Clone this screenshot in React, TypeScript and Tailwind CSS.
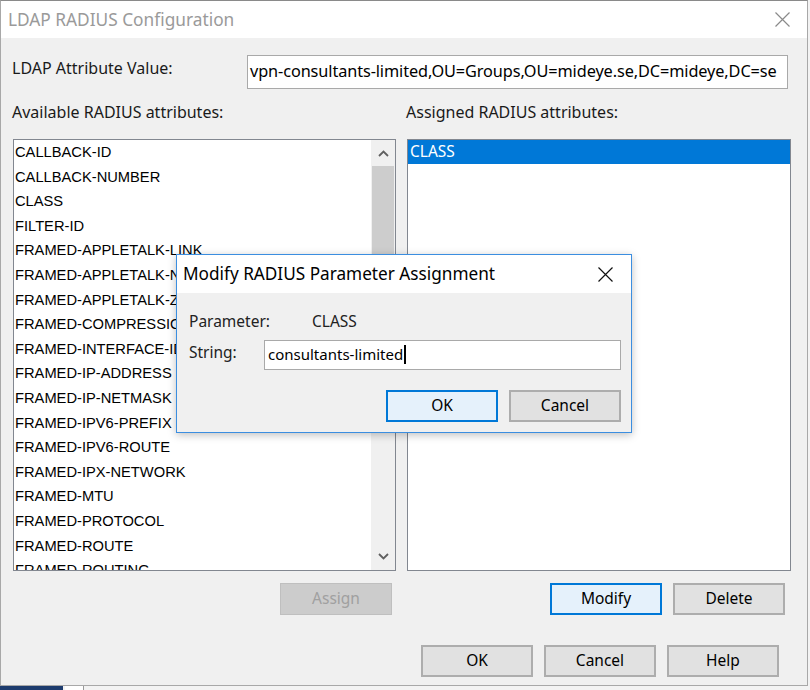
import React from "react";

const ui = "font-['Noto_Sans','Open_Sans',sans-serif]";
const dlg = "font-['Liberation_Sans',Arial,sans-serif]";

const attributes = [
  "CALLBACK-ID",
  "CALLBACK-NUMBER",
  "CLASS",
  "FILTER-ID",
  "FRAMED-APPLETALK-LINK",
  "FRAMED-APPLETALK-NETWORK",
  "FRAMED-APPLETALK-ZONE",
  "FRAMED-COMPRESSION",
  "FRAMED-INTERFACE-ID",
  "FRAMED-IP-ADDRESS",
  "FRAMED-IP-NETMASK",
  "FRAMED-IPV6-PREFIX",
  "FRAMED-IPV6-ROUTE",
  "FRAMED-IPX-NETWORK",
  "FRAMED-MTU",
  "FRAMED-PROTOCOL",
  "FRAMED-ROUTE",
  "FRAMED-ROUTING",
];

// ── Small pieces ──────────────────────────────────────────────────────────────

function CloseX({ color, size = 15 }: { color: string; size?: number }) {
  return (
    <svg width={size} height={size} viewBox="0 0 15 15">
      <path d="M0.5 0.5 L14.5 14.5 M14.5 0.5 L0.5 14.5" stroke={color} strokeWidth="1.2" />
    </svg>
  );
}

function Chevron({ up }: { up?: boolean }) {
  return (
    <svg width="11" height="7" viewBox="0 0 11 7">
      <path
        d={up ? "M1 6 L5.5 1.5 L10 6" : "M1 1 L5.5 5.5 L10 1"}
        fill="none"
        stroke="#606060"
        strokeWidth="1.8"
      />
    </svg>
  );
}

function WinButton({
  label,
  focused,
  disabled,
}: {
  label: string;
  focused?: boolean;
  disabled?: boolean;
}) {
  const look = disabled
    ? "bg-[#cccccc] border border-[#bfbfbf] text-[#a0a0a0]"
    : focused
      ? "bg-[#e5f1fb] border-2 border-[#0078d7] text-black"
      : "bg-[#e1e1e1] border-2 border-[#adadad] text-black";
  return (
    <div
      className={`w-[112px] h-[32px] flex items-center justify-center pb-[1px] text-[15.5px] ${ui} ${look}`}
    >
      {label}
    </div>
  );
}

// ── Modal dialog ──────────────────────────────────────────────────────────────

function ModifyDialog() {
  return (
    <div className="absolute left-[176px] top-[254px] w-[456px] h-[179px] border border-[#3b8ee0] bg-[#f0f0f0] flex flex-col shadow-[0_2px_8px_rgba(0,0,0,0.25)]">
      <div className="h-[38px] bg-white flex items-center justify-between pl-[6px] pr-[18px] shrink-0">
        <span className={`text-[17.2px] text-black ${ui}`}>Modify RADIUS Parameter Assignment</span>
        <CloseX color="#111" />
      </div>
      <div className={`flex flex-col text-[15.5px] text-[#222] ${ui}`}>
        <div className="flex items-center mt-[19px] h-[20px] pl-[12px]">
          <span className="w-[123px]">Parameter:</span>
          <span>CLASS</span>
        </div>
        <div className="flex items-center mt-[8px] pl-[12px]">
          <span className="w-[75px] -mt-[4px]">String:</span>
          <div className="w-[357px] h-[30px] bg-white border border-[#a9a9a9] flex items-center pl-[3px] pb-[2px] text-[15px] text-black">
            consultants-limited
            <span className="inline-block w-[1.5px] h-[19px] bg-black ml-[1px]" />
          </div>
        </div>
        <div className="flex justify-end gap-[11px] mt-[20px] pr-[10px]">
          <WinButton label="OK" focused />
          <WinButton label="Cancel" />
        </div>
      </div>
    </div>
  );
}

// ── Listboxes ─────────────────────────────────────────────────────────────────

function AvailableList() {
  return (
    <div className="w-[383px] h-[432px] bg-white border border-[#828790] flex overflow-hidden">
      <div className={`flex-1 flex flex-col overflow-hidden ${dlg} text-[14.7px] text-black`}>
        {attributes.map((a) => (
          <div key={a} className="h-[24.6px] leading-[24.6px] pl-[1px] whitespace-nowrap shrink-0">
            {a}
          </div>
        ))}
      </div>
      <div className="w-[24px] bg-[#f0f0f0] flex flex-col shrink-0">
        <div className="h-[26px] flex items-center justify-center">
          <Chevron up />
        </div>
        <div className="mx-[1px] h-[160px] bg-[#cdcdcd]" />
        <div className="flex-1" />
        <div className="h-[28px] flex items-center justify-center">
          <Chevron />
        </div>
      </div>
    </div>
  );
}

function AssignedList() {
  return (
    <div className="w-[384px] h-[432px] bg-white border border-[#828790] flex flex-col">
      <div className={`h-[24px] bg-[#0078d7] text-white pl-[2px] leading-[22px] text-[15.5px] ${ui}`}>
        CLASS
      </div>
    </div>
  );
}

// ── Page ──────────────────────────────────────────────────────────────────────

export default function App() {
  return (
    <div className="w-[810px] h-[690px] bg-[#f3f3f3] relative overflow-hidden flex flex-col">
      {/* Main window */}
      <div className="w-[808px] h-[686px] border-l border-r border-b border-[#a8a8a8] flex flex-col shrink-0 border-t border-t-[#8a8a8a]">
        {/* Title bar */}
        <div className="h-[37px] bg-white flex items-center justify-between pl-[7px] pr-[17px] shrink-0">
          <span className={`text-[17.3px] text-[#9a9a9a] ${ui}`}>LDAP RADIUS Configuration</span>
          <CloseX color="#8a8a8a" />
        </div>

        {/* Body */}
        <div className={`flex-1 bg-[#f0f0f0] flex flex-col ${ui} text-[16px] text-[#1a1a1a]`}>
          <div className="flex items-center mt-[17px]">
            <span className="w-[246px] pl-[11px] -mt-[8px]">LDAP Attribute Value:</span>
            <div className="w-[541px] h-[34px] bg-white border border-[#a9a9a9] flex items-center pl-[2px] pb-[2px] overflow-hidden whitespace-nowrap text-black text-[16.3px] tracking-[-0.1px]">
              vpn-consultants-limited,OU=Groups,OU=mideye.se,DC=mideye,DC=se
            </div>
          </div>

          <div className="flex mt-[13px] h-[20px] items-center">
            <span className="w-[405px] pl-[11px]">Available RADIUS attributes:</span>
            <span>Assigned RADIUS attributes:</span>
          </div>

          <div className="flex mt-[17px] pl-[12px] gap-[11px]">
            <AvailableList />
            <AssignedList />
          </div>

          <div className="flex mt-[12px]">
            <div className="w-[391px] flex justify-end">
              <WinButton label="Assign" disabled />
            </div>
            <div className="flex ml-[158px] gap-[11px]">
              <WinButton label="Modify" focused />
              <WinButton label="Delete" />
            </div>
          </div>

          <div className="flex mt-[30px] ml-[420px] gap-[11px]">
            <WinButton label="OK" />
            <WinButton label="Cancel" />
            <WinButton label="Help" />
          </div>
        </div>
      </div>

      {/* Strip of the desktop below */}
      <div className="flex h-[4px] shrink-0">
        <div className="w-[63px] bg-[#1d3c6e]" />
        <div className="w-[18px] bg-white ml-[2px]" />
        <div className="w-[1px] bg-[#999]" />
      </div>

      <ModifyDialog />
    </div>
  );
}
